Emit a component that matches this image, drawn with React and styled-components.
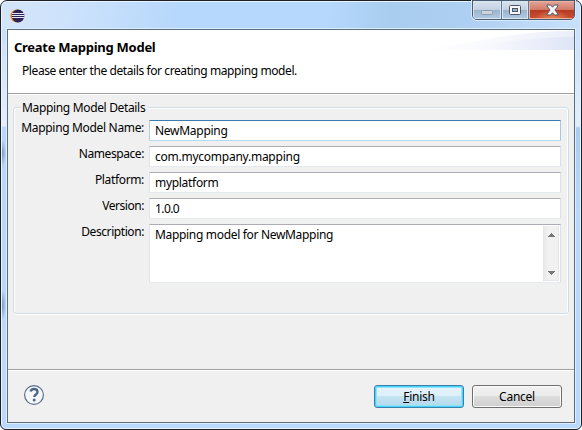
import React from "react";
import styled, { createGlobalStyle } from "styled-components";

const GlobalStyle = createGlobalStyle`
  *, *::before, *::after { box-sizing: border-box; }
  html, body { margin: 0; background: #fff; overflow: hidden; }
  body { font: 12px/16px "Noto Sans", "Open Sans", sans-serif; color: #000; }
`;

const Frame = styled.div`
  width: 582px;
  height: 430px;
  padding: 0 6px 6px 6px;
  border: 1px solid #1d1f28;
  border-radius: 7px 7px 6px 6px;
  box-shadow: inset 0 0 0 1px #eaf5ff;
  background:
    radial-gradient(ellipse 4px 14px at 1px 152px, #7598bd, transparent) no-repeat,
    radial-gradient(ellipse 4px 16px at 1px 304px, #7598bd, transparent) no-repeat,
    linear-gradient(#c9dff8 0, #e4f0fb 97px, #b9d9fa 98px, #b9dafc 100%) 0 28px / 7px 100% no-repeat,
    linear-gradient(#c9e1fb 0, #e1effc 97px, #a9cdf2 99px, #b9dafc 190px) 573px 28px / 7px 100% no-repeat,
    linear-gradient(100deg, #d4e5f9 0, #cde2fb 12%, #b6d8fc 31%, #b5d8fc 56%, #a9cdef 67%, #adcff2 80%, #c9e1fa 100%) 0 0 / 100% 29px no-repeat,
    #b9dafc;
`;

const TitleBar = styled.header`
  height: 28px;
  display: flex;
  justify-content: space-between;
  align-items: flex-start;
  padding-left: 3px;
`;

const AppIcon = styled.svg`
  width: 15px;
  height: 14px;
  margin-top: 8px;
  flex: none;
`;

const Caption = styled.div`
  display: flex;
  width: 103px;
  height: 20px;
  margin: -1px 0 0 0;
  border: 1px solid #4b5c70;
  border-radius: 0 0 5px 5px;
  box-shadow: 0 0 0 1px #d7eafc;
  overflow: hidden;
`;

const CaptionButton = styled.div`
  flex: none;
  width: ${(p) => p.$width}px;
  display: grid;
  place-items: center;
  border-left: ${(p) => (p.$first ? "0" : "1px solid #66788e")};
  box-shadow: inset 0 0 0 1px ${(p) => (p.$close ? "#eeb1a3" : "#d8e6f3")};
  background: ${(p) =>
    p.$close
      ? "radial-gradient(ellipse 18px 9px at 50% 100%, #e98a57, transparent), linear-gradient(#e2a597 0, #d37c6b 47%, #b93822 50%, #c84e32 100%)"
      : "linear-gradient(#d9e3ef 0, #c4d2e3 47%, #9bb2cb 50%, #b2cbe4 100%)"};
`;

const Client = styled.main`
  height: 394px;
  width: 568px;
  display: flex;
  flex-direction: column;
  border: 1px solid #5c6c7d;
  background: #f0f0f0;
  box-shadow: 0 0 0 1px #def0ff;
`;

const Banner = styled.section`
  position: relative;
  height: 64px;
  flex: none;
  padding: 9px 0 0 6px;
  background: #fff;
  border-bottom: 1px solid #a0a0a0;
  box-shadow: 0 1px 0 #fff;
`;

const Swoosh = styled.svg`
  position: absolute;
  right: 0;
  top: 0;
  width: 150px;
  height: 20px;
`;

const Heading = styled.h1`
  position: relative;
  margin: 0;
  font-size: 13px;
  line-height: 16px;
  font-weight: 700;
  letter-spacing: -0.27px;
`;

const Message = styled.p`
  margin: 8px 0 0 8px;
  letter-spacing: -0.41px;
`;

const Body = styled.section`
  height: 275px;
  flex: none;
  padding: 6px 5px 0;
`;

const Group = styled.fieldset`
  position: relative;
  width: 556px;
  height: 214px;
  margin: 0;
  padding: 5px 7px 0 8px;
  min-width: 0;
  border: 0;

  &::before {
    content: "";
    position: absolute;
    inset: 7px 0 0 0;
    border: 1px solid #d0dce6;
    border-radius: 3px;
    box-shadow: inset 1px 1px 0 #fff, 0 1px 0 #fff, inset -1px 0 0 #fff;
  }
`;

const GroupTitle = styled.div`
  position: relative;
  width: 126px;
  height: 16px;
  margin: -5px 0 0 0;
  padding-left: 1px;
  background: #f0f0f0;
  white-space: nowrap;
  letter-spacing: -0.34px;
`;

const Form = styled.div`
  position: relative;
  display: grid;
  grid-template-columns: 123px 412px;
  column-gap: 5px;
  row-gap: 5px;
  margin-top: 4px;
`;

const Label = styled.label`
  justify-self: end;
  white-space: nowrap;
  letter-spacing: ${(p) => p.$track || 0}px;
`;

const Field = styled.div`
  height: ${(p) => (p.$tall ? 59 : 21)}px;
  padding: 2px 1px 0 5px;
  border: 1px solid;
  border-radius: 1px;
  border-color: ${(p) => (p.$focus ? "#3d7bad #a4c9e3 #b7d9ed #b5cfe7" : "#abadb3 #dbdfe6 #e3e9ef #e2e3ea")};
  background: #fff;
  display: flex;
  justify-content: space-between;
  white-space: nowrap;
  letter-spacing: ${(p) => p.$track || 0}px;
`;

const ScrollBar = styled.div`
  width: 16px;
  height: 55px;
  margin-top: -1px;
  padding: 7px 0 5px;
  display: flex;
  flex-direction: column;
  align-items: center;
  justify-content: space-between;
  border: 1px solid #e6e6e6;
  border-top: 0;
  background: linear-gradient(90deg, #e9e9e9, #f1f1f1 4px, #f1f1f1);
`;

const Footer = styled.footer`
  flex: 1;
  display: flex;
  align-items: flex-start;
  gap: 8px;
  padding: 15px 12px 0 15px;
  border-top: 1px solid #a0a0a0;
  box-shadow: inset 0 1px 0 #fff;
`;

const HelpIcon = styled.svg`
  width: 22px;
  height: 22px;
  margin: -1px auto 0 0;
`;

const Button = styled.button`
  width: 90px;
  height: 23px;
  padding: 0;
  font: inherit;
  color: #000;
  border: 1px solid ${(p) => (p.$primary ? "#3c7fb1" : "#707070")};
  border-radius: 3px;
  box-shadow: ${(p) => (p.$primary ? "inset 0 0 0 1px #45d3fb, inset 0 0 0 2px #91e3fa" : "inset 0 0 0 1px #fbfbfb")};
  background: ${(p) =>
    p.$primary
      ? "linear-gradient(#e8f4fa 0, #dceff8 49%, #c4e4f2 50%, #b2d8ec 100%)"
      : "linear-gradient(#f2f2f2 0, #ebebeb 49%, #dddddd 50%, #cfcfcf 100%)"};
  letter-spacing: -0.25px;
`;

const rows = [
  { label: "Mapping Model Name:", value: "NewMapping", focus: true, labelTrack: -0.33, track: -0.28 },
  { label: "Namespace:", value: "com.mycompany.mapping", labelTrack: -0.42, track: -0.25 },
  { label: "Platform:", value: "myplatform", labelTrack: -0.35, track: -0.3 },
  { label: "Version:", value: "1.0.0", labelTrack: -0.45, track: -0.6 },
];

const Arrow = ({ down }) => (
  <svg width="8" height="4" viewBox="0 0 8 4" shapeRendering="crispEdges">
    <path d={down ? "M0 0h8L4 4z" : "M4 0l4 4H0z"} fill="#777" />
  </svg>
);

export default function App() {
  return (
    <>
      <GlobalStyle />
      <Frame>
        <TitleBar>
          <AppIcon viewBox="0 0 15 14">
            <circle cx="6.7" cy="7" r="6.4" fill="#f7941e" />
            <circle cx="8" cy="7" r="6.4" fill="#2c2255" />
            <path d="M2 4.5h12M1.6 6.5h12.8M2 8.5h12" stroke="#e9e7f4" strokeWidth="1" />
          </AppIcon>
          <Caption>
            <CaptionButton $width={28} $first>
              <svg width="12" height="18" viewBox="0 0 12 18">
                <rect x=".5" y="9.5" width="11" height="4" rx="1" fill="#ccd5df" stroke="#8e9cac" />
              </svg>
            </CaptionButton>
            <CaptionButton $width={27}>
              <svg width="12" height="18" viewBox="0 0 12 18">
                <rect x=".5" y="4.500" width="11" height="9" rx="1" fill="#f5f7fa" stroke="#4e5566" />
                <rect x="3.500" y="7.500" width="5" height="3" fill="#9bb2cb" stroke="#4e5566" />
              </svg>
            </CaptionButton>
            <CaptionButton $width={47} $close>
              <svg width="13" height="18" viewBox="0 0 13 18">
                <path d="M1 4h3.7l1.8 2.2L8.3 4H12v1L9 9l3 4v1H8.3L6.5 11.8 4.700 14H1v-1l3-4-3-4z" fill="#f4f4f6" stroke="#535666" strokeLinejoin="round" />
              </svg>
            </CaptionButton>
          </Caption>
        </TitleBar>
        <Client>
          <Banner>
            <Swoosh viewBox="0 0 150 20">
              <defs>
                <linearGradient id="swooshOuter">
                  <stop offset="0" stopColor="#fff" />
                  <stop offset="0.5" stopColor="#f8f9fd" />
                  <stop offset="1" stopColor="#ebeefa" />
                </linearGradient>
                <linearGradient id="swooshInner">
                  <stop offset="0" stopColor="#f8f9fd" stopOpacity="0" />
                  <stop offset="1" stopColor="#dee4f7" />
                </linearGradient>
              </defs>
              <path d="M0 20C45 14 85 1 150 1v19z" fill="url(#swooshOuter)" />
              <path d="M40 20C70 12 110 7 150 7v13z" fill="url(#swooshInner)" />
            </Swoosh>
            <Heading>Create Mapping Model</Heading>
            <Message>Please enter the details for creating mapping model.</Message>
          </Banner>
          <Body>
            <Group>
              <GroupTitle>Mapping Model Details</GroupTitle>
              <Form>
                {rows.map((r) => (
                  <React.Fragment key={r.label}>
                    <Label $track={r.labelTrack}>{r.label}</Label>
                    <Field $focus={r.focus} $track={r.track}>{r.value}</Field>
                  </React.Fragment>
                ))}
                <Label $track={-0.42}>Description:</Label>
                <Field $tall $track={-0.32}>
                  <span>Mapping model for NewMapping</span>
                  <ScrollBar>
                    <Arrow />
                    <Arrow down />
                  </ScrollBar>
                </Field>
              </Form>
            </Group>
          </Body>
          <Footer>
            <HelpIcon viewBox="0 0 22 22">
              <circle cx="11" cy="11" r="9.4" fill="#f6f7f9" stroke="#58708f" strokeWidth="1.2" />
              <path d="M7.6 7.6C8 5.8 9.4 5 11 5c2 0 3.5 1.2 3.5 3 0 2.4-3.2 2.5-3.2 5" fill="none" stroke="#4c668c" strokeWidth="2.4" />
              <circle cx="11.2" cy="16" r="1.5" fill="#4c668c" />
            </HelpIcon>
            <Button $primary><u>F</u>inish</Button>
            <Button>Cancel</Button>
          </Footer>
        </Client>
      </Frame>
    </>
  );
}
